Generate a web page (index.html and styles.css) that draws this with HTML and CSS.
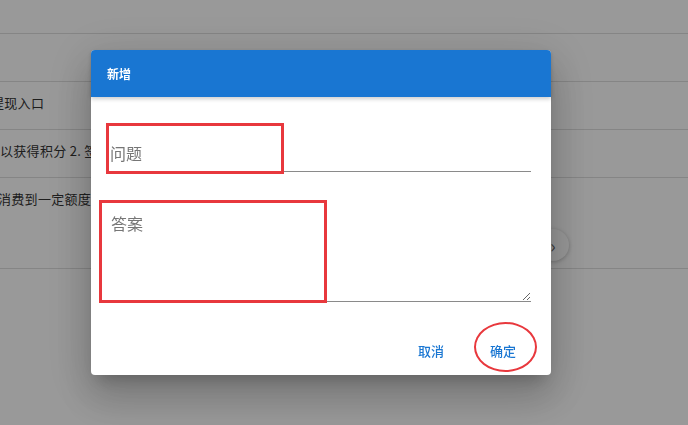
FILE: index.html
```html
<!DOCTYPE html>
<html lang="zh-CN">
<head>
  <meta charset="UTF-8" />
  <title>新增</title>
  <meta name="viewport" content="width=device-width, initial-scale=1.0" />
  <link rel="stylesheet" href="styles.css">
</head>
<body>
  <div class="page">
    <div class="toolbar"></div>
    <div class="row"></div>
    <div class="row"><span class="cell cut">提现入口</span></div>
    <div class="row"><span class="cell">以获得积分 2. 签到可以获得积分</span></div>
    <div class="row last">
      <span class="cell nudge">消费到一定额度自动升级会员等级</span>
      <div class="pager"><span class="round">&rsaquo;</span></div>
    </div>
  </div>

  <div class="overlay">
    <div class="dialog">
      <div class="dialog-title">新增</div>
      <form class="dialog-body">
        <input class="field" type="text" placeholder="问题" />
        <textarea class="field area" placeholder="答案"></textarea>
      </form>
      <div class="dialog-actions">
        <button class="btn" type="button">取消</button>
        <button class="btn" type="button">确定</button>
      </div>

      <!-- annotation marks -->
      <div class="mark mark-question"></div>
      <div class="mark mark-answer"></div>
      <div class="mark mark-ok"></div>
    </div>
  </div>
</body>
</html>
```

FILE: styles.css
```css
body {
  margin: 0;
  background: #fff;
  font-family: "Noto Sans CJK SC", "Noto Sans", sans-serif;
  color: #333;
  overflow: hidden;
}
.page {
  width: 688px;
}
.toolbar {
  height: 33px;
  border-bottom: 1px solid #dedede;
}
.row {
  height: 47px;
  border-bottom: 1px solid #dedede;
  display: flex;
  align-items: center;
  font-size: 13px;
}
.row.last {
  height: 90px;
  align-items: flex-start;
  flex-direction: column;
}
.cell {
  white-space: nowrap;
  margin-top: -6px;
  letter-spacing: 0.3px;
}
.cut {
  margin-left: -9px;
}
.nudge {
  margin-left: -2px;
  margin-top: 11px;
}
.pager {
  align-self: stretch;
  display: flex;
  justify-content: flex-end;
  padding: 21px 119px 0 0;
}
.round {
  width: 32px;
  height: 32px;
  border-radius: 50%;
  background: #fff;
  box-shadow: 0 1px 4px rgba(0,0,0,0.25);
  display: flex;
  align-items: center;
  justify-content: center;
  font-size: 18px;
  color: #666;
}
.overlay {
  position: fixed;
  inset: 0;
  background: rgba(0,0,0,0.4);
  display: flex;
  align-items: center;
  padding-left: 91px;
}
.dialog {
  position: relative;
  width: 460px;
  background: #fff;
  border-radius: 4px;
  box-shadow: 0 11px 15px -7px rgba(0,0,0,0.2),
              0 24px 38px 3px rgba(0,0,0,0.14),
              0 9px 46px 8px rgba(0,0,0,0.12);
}
.dialog-title {
  height: 47px;
  background: #1976d2;
  color: #fff;
  border-radius: 4px 4px 0 0;
  font-size: 12px;
  font-weight: 700;
  padding: 0 16px;
  display: flex;
  align-items: center;
  box-shadow: 0 2px 4px rgba(0,0,0,0.2);
  position: relative;
}
.dialog-body {
  display: flex;
  flex-direction: column;
  gap: 38px;
  padding: 42px 20px 0 18px;
  margin: 0;
}
.field {
  font-family: inherit;
  font-size: 16px;
  color: #333;
  border: none;
  border-bottom: 1px solid #8a8a8a;
  outline: none;
  padding: 0 1px 4px;
  height: 33px;
  box-sizing: border-box;
  background: transparent;
}
.field::placeholder {
  color: #767676;
}
.area {
  height: 92px;
  padding: 3px 2px;
  line-height: 20px;
  resize: vertical;
}
.dialog-actions {
  display: flex;
  justify-content: flex-end;
  gap: 8px;
  padding: 22px 16px 7px;
  margin-top: 8px;
}
.btn {
  min-width: 64px;
  height: 36px;
  border: none;
  background: transparent;
  color: #1976d2;
  font-family: inherit;
  font-size: 13px;
  font-weight: 500;
  cursor: pointer;
}
.mark {
  position: absolute;
  border: 3px solid #e8383d;
  box-sizing: border-box;
}
.mark-question {
  left: 15px;
  top: 73px;
  width: 178px;
  height: 51px;
}
.mark-answer {
  left: 8px;
  top: 150px;
  width: 228px;
  height: 103px;
}
.mark-ok {
  left: 383px;
  top: 272px;
  width: 63px;
  height: 50px;
  border-width: 2px;
  border-radius: 50%;
}
```
